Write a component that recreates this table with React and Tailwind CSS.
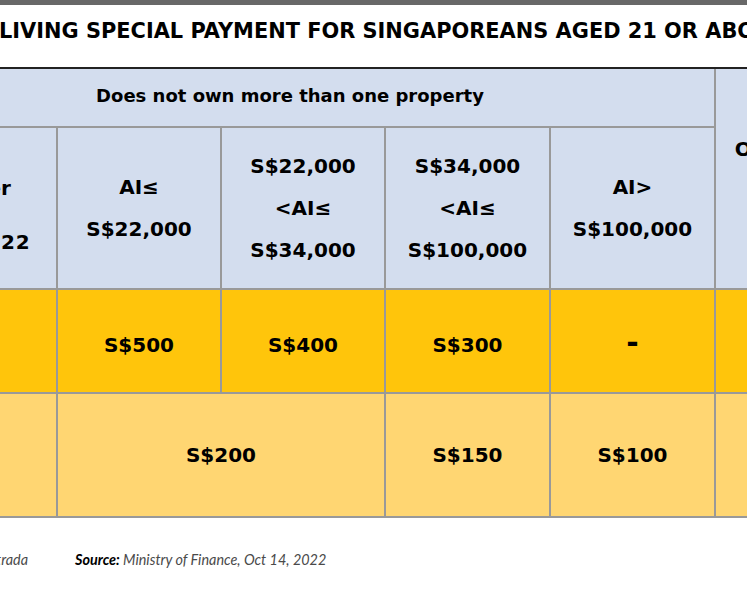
import React from 'react';

const headBg = 'bg-[#d3ddee]';

function Lines({ lines, lh = 'leading-[42px]' }) {
  return (
    <div className={`text-center ${lh}`}>
      {lines.map((l, i) => (
        <div key={i} className={`whitespace-nowrap ${l.cls || ''}`}>{l.text || l}</div>
      ))}
    </div>
  );
}

export default function App() {
  return (
    <div className="w-[747px] h-[598px] overflow-hidden bg-white text-black font-['DejaVu_Sans',sans-serif]">
      {/* top strip */}
      <div className="h-[5px] bg-[#686868]" />

      {/* title */}
      <div className="h-[62px] flex items-center pb-[9px]">
        <h1 className="ml-[-1px] whitespace-nowrap text-[20.9px] font-bold leading-none">
          LIVING SPECIAL PAYMENT FOR SINGAPOREANS AGED 21 OR ABOVE
        </h1>
      </div>

      {/* table */}
      <div className="ml-[-134px] w-[1014px] grid grid-cols-[190px_162px_162px_163px_163px_164px] grid-rows-[57px_160px_102px_122px] gap-[2px] bg-[#999] border-t-2 border-t-[#222] border-b-2 border-b-[#999] font-bold text-[20px]">
        {/* header row 1 */}
        <div className={`${headBg} col-span-5 flex items-center justify-center text-[18px] pb-[5px]`}>
          Does not own more than one property
        </div>
        <div className={`${headBg} row-span-2 flex items-center justify-center`}>
          <Lines lines={['Owns more', 'than one', 'property']} lh="leading-[29px]" />
        </div>

        {/* header row 2 */}
        <div className={`${headBg} flex items-center justify-center pb-[12px]`}>
          <Lines
            lines={['Per', 'taxpayer', 'by AI', { text: 'for YA 2022', cls: 'tracking-[0.8px]' }]}
            lh="leading-[27px]"
          />
        </div>
        <div className={`${headBg} flex items-center justify-center`}>
          <Lines lines={['AI≤', 'S$22,000']} />
        </div>
        <div className={`${headBg} flex items-center justify-center`}>
          <Lines lines={['S$22,000', '<AI≤', 'S$34,000']} />
        </div>
        <div className={`${headBg} flex items-center justify-center`}>
          <Lines lines={['S$34,000', '<AI≤', 'S$100,000']} />
        </div>
        <div className={`${headBg} flex items-center justify-center`}>
          <Lines lines={['AI>', 'S$100,000']} />
        </div>

        {/* row: special payment */}
        <div className="bg-[#ffc50b]" />
        <div className="bg-[#ffc50b] flex items-center justify-center pt-[8px]">S$500</div>
        <div className="bg-[#ffc50b] flex items-center justify-center pt-[8px]">S$400</div>
        <div className="bg-[#ffc50b] flex items-center justify-center pt-[8px]">S$300</div>
        <div className="bg-[#ffc50b] flex items-center justify-center pt-[4px] text-[30px] leading-none">-</div>
        <div className="bg-[#ffc50b]" />

        {/* row: additional */}
        <div className="bg-[#ffd672]" />
        <div className="bg-[#ffd672] col-span-2 flex items-center justify-center">S$200</div>
        <div className="bg-[#ffd672] flex items-center justify-center">S$150</div>
        <div className="bg-[#ffd672] flex items-center justify-center">S$100</div>
        <div className="bg-[#ffd672]" />
      </div>

      {/* footer */}
      <div className="pt-[33px] flex items-center text-[14.4px] leading-[18px] italic font-['Lato',sans-serif] text-[#4a4a4a]">
        <div className="w-[28px] flex justify-end whitespace-nowrap">Graphic: Estrada</div>
        <div className="ml-[47px] whitespace-nowrap">
          <span className="font-bold text-black">Source:</span> Ministry of Finance, Oct 14, 2022
        </div>
      </div>
    </div>
  );
}
